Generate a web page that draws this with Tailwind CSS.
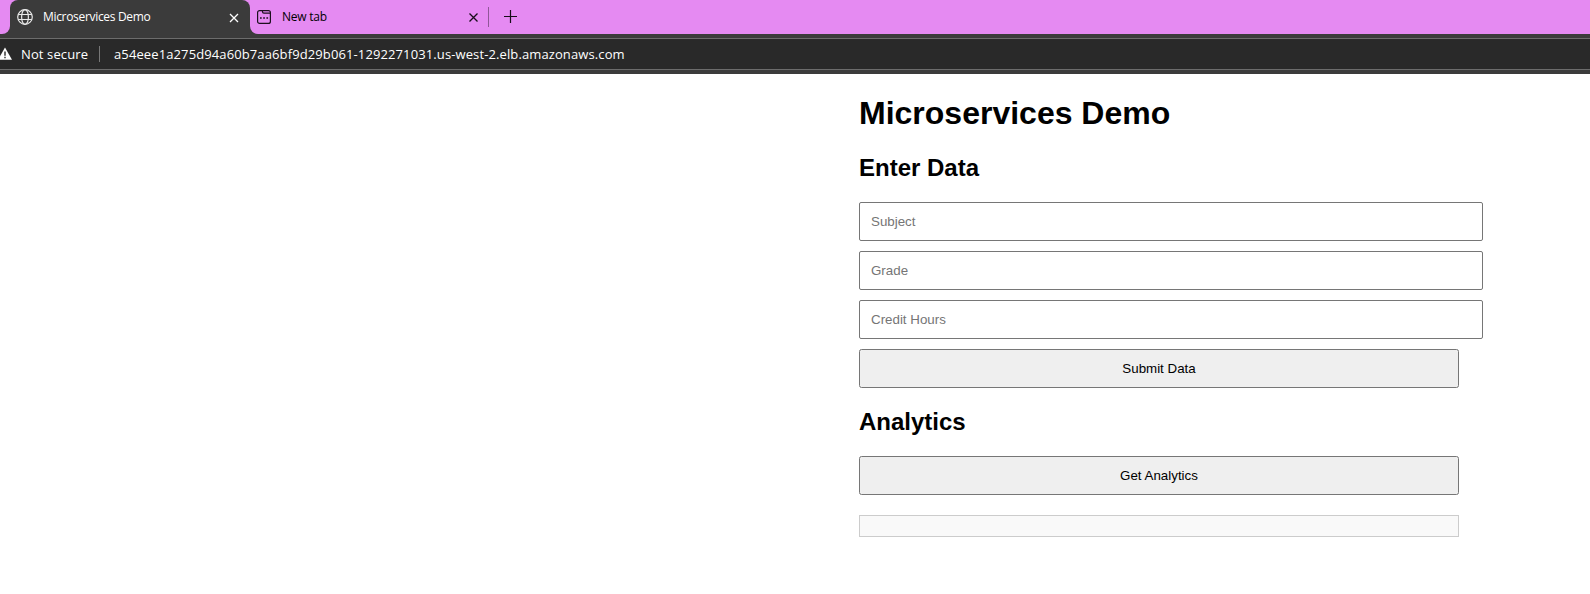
<!DOCTYPE html>
<html lang="en">
<head>
<meta charset="utf-8">
<title>Microservices Demo</title>
<script src="https://cdn.jsdelivr.net/npm/@tailwindcss/browser@4"></script>
</head>
<body class="bg-white text-black font-['Liberation_Sans',Arial,sans-serif] h-[594px] overflow-hidden">
<header class="bg-[#3b3b3b] h-[74px] font-['Open_Sans',sans-serif]">
  <div class="flex h-[34px] text-xs">
    <div class="w-[10px] bg-[#e58af2] rounded-br-lg"></div>
    <div class="w-[240px] bg-[#e58af2]">
      <div class="flex items-center h-[34px] rounded-t-lg bg-[#3b3b3b] text-white pl-[7px] pr-[11px]">
        <svg class="size-4" viewBox="0 0 16 16" fill="none" stroke="#e8e8e8" stroke-width="1.2"><circle cx="8" cy="8" r="7.3"/><ellipse cx="8" cy="8" rx="3.4" ry="7.3"/><path d="M1.2 5.5h13.6M1.2 10.5h13.6"/></svg>
        <span class="ml-[10px] w-[108px] whitespace-nowrap tracking-[-0.32px] leading-[34px]">Microservices Demo</span>
        <svg class="ml-auto size-[10px] mt-[1px]" viewBox="0 0 10 10" stroke="#fff" stroke-width="1.3"><path d="M1 1l8 8M9 1l-8 8"/></svg>
      </div>
    </div>
    <div class="flex-1 bg-[#3b3b3b]">
      <div class="flex items-center h-[34px] rounded-bl-lg bg-[#e58af2] pl-[7px]">
        <svg class="size-[14px]" viewBox="0 0 14 14" fill="none" stroke="#1c101e" stroke-width="1.2"><rect x=".6" y=".6" width="12.8" height="12.8" rx="2"/><path d="M5.5 .6v1.2q0 1.4 1.4 1.4h6.5"/><path d="M3 8h1.7M6.2 8h1.7M9.4 8h1.7" stroke-width="1.7"/></svg>
        <span class="ml-[11px] tracking-[-0.25px] leading-[34px] w-[60px]">New tab</span>
        <svg class="ml-[127px] size-[9px] mt-[1px]" viewBox="0 0 9 9" stroke="#160d18" stroke-width="1.3"><path d="M.5.5l8 8M8.5.5l-8 8"/></svg>
        <div class="ml-[10px] w-px h-5 bg-[#8f5798]"></div>
        <svg class="ml-[15px] -mt-px size-[13px]" viewBox="0 0 13 13" stroke="#160d18" stroke-width="1.2"><path d="M0 6.5h13M6.5 0v13"/></svg>
      </div>
    </div>
  </div>
  <div class="mt-1 h-8 box-border border-y border-[#6c6c6c] bg-[#292929] flex items-center text-white text-sm whitespace-nowrap leading-[30px]">
    <svg class="w-3 h-[13px] -mt-px shrink-0" viewBox="0 0 12 13"><path d="M5 .4 12.1 12.8H-2Z" fill="#fff"/><path d="M5 4.5v4.2M5 9.8v1.4" stroke="#292929" stroke-width="1.4"/></svg>
    <span class="ml-[9px] w-[68px] text-[13px] tracking-[0.12px]">Not secure</span>
    <div class="ml-[10px] w-px h-4 bg-[#777]"></div>
    <span class="ml-[14px] text-[13px] tracking-[0.112px]">a54eee1a275d94a60b7aa6bf9d29b061-1292271031.us-west-2.elb.amazonaws.com</span>
  </div>
</header>
<main class="ml-[859px] w-[600px] pt-[21px]">
  <h1 class="text-[32px] leading-[37px] font-bold">Microservices Demo</h1>
  <h2 class="mt-[22px] text-2xl leading-[27px] font-bold">Enter Data</h2>
  <form class="mt-[21px] flex flex-col gap-[10px] text-[13.333px]">
    <input class="w-[624px] h-[39px] border border-[#767676] rounded-[2px] px-[11px] placeholder:text-[#757575]" placeholder="Subject">
    <input class="w-[624px] h-[39px] border border-[#767676] rounded-[2px] px-[11px] placeholder:text-[#757575]" placeholder="Grade">
    <input class="w-[624px] h-[39px] border border-[#767676] rounded-[2px] px-[11px] placeholder:text-[#757575]" placeholder="Credit Hours">
    <button type="button" class="w-[600px] h-[39px] border border-[#767676] rounded-[2.5px] bg-[#efefef]">Submit Data</button>
  </form>
  <h2 class="mt-5 text-2xl leading-[27px] font-bold">Analytics</h2>
  <button type="button" class="mt-[21px] block w-[600px] h-[39px] border border-[#767676] rounded-[2.5px] bg-[#efefef] text-[13.333px]">Get Analytics</button>
  <div class="mt-5 h-[22px] border border-[#ccc] bg-[#f9f9f9]"></div>
</main>
</body>
</html>
